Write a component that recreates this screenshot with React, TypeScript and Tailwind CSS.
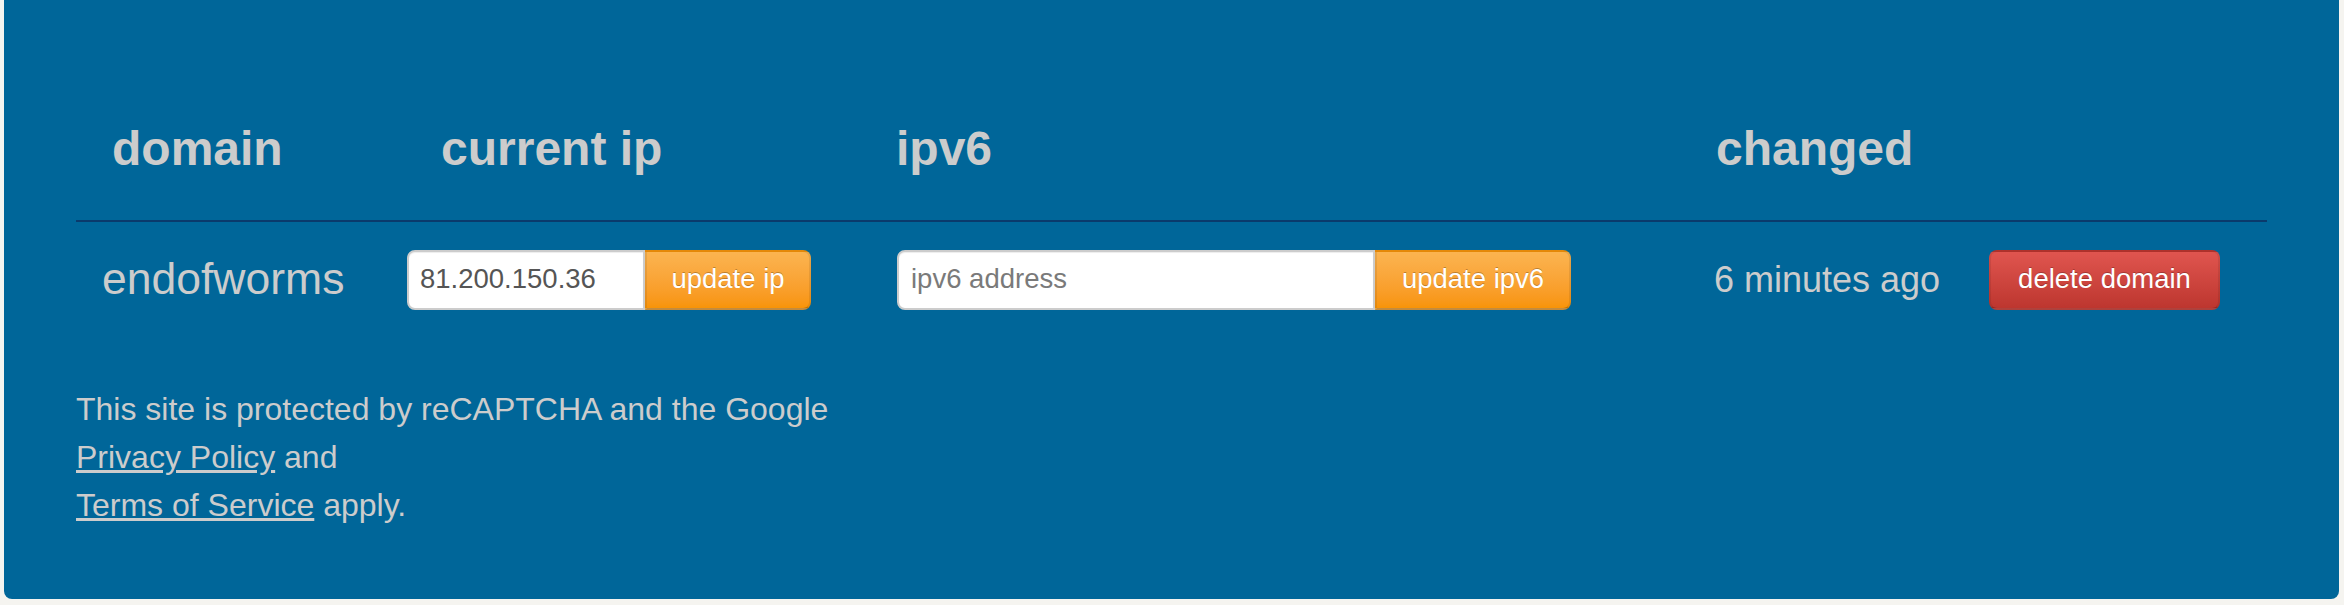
import React from "react";

const font = { fontFamily: '"Liberation Sans", Arial, Helvetica, sans-serif' };

export default function App() {
  return (
    <div className="min-h-[605px] w-full bg-[#f5f4f0]" style={font}>
      <div className="ml-[4px] w-[2335px] rounded-b-[8px] bg-[#006699] px-[72px] pt-[125px] pb-[70px] text-[#cccccc]">
        {/* header row */}
        <div className="grid grid-cols-[314px_490px_820px_270px_1fr] border-b-2 border-[#0a3a6c] pb-[47px] text-[48px] font-bold leading-[48px]">
          <div className="pl-[36px]">domain</div>
          <div className="pl-[51px]">current ip</div>
          <div className="pl-[16px]">ipv6</div>
          <div className="pl-[16px]">changed</div>
          <div></div>
        </div>

        {/* data row */}
        <div className="mt-[27px] grid h-[60px] grid-cols-[314px_490px_820px_270px_1fr] items-center">
          <div className="pl-[26px] text-[44.5px] leading-[60px] pb-[2px]">endofworms</div>
          <div className="flex h-[60px] pl-[17px]">
            <input
              readOnly
              value="81.200.150.36"
              className="h-[60px] w-[238px] rounded-l-[8px] border-2 border-[#cccccc] bg-white pl-[11px] pb-[3px] text-[27.5px] text-[#555555] shadow-[inset_0_1px_1px_rgba(0,0,0,0.075)] outline-none"
              style={font}
            />
            <button
              className="h-[60px] w-[166px] rounded-r-[8px] border-2 border-[rgba(0,0,0,0.08)] border-b-[rgba(0,0,0,0.22)] bg-linear-to-b from-[#fbb450] to-[#f89406] pb-[3px] text-[27.5px] text-white [text-shadow:0_-1px_0_rgba(0,0,0,0.25)]"
              style={font}
            >
              update ip
            </button>
          </div>
          <div className="flex h-[60px] pl-[17px]">
            <input
              placeholder="ipv6 address"
              className="h-[60px] w-[478px] rounded-l-[8px] border-2 border-[#cccccc] bg-white pl-[12px] pb-[3px] text-[27.5px] text-[#555555] placeholder:text-[#7a7a7a] shadow-[inset_0_1px_1px_rgba(0,0,0,0.075)] outline-none"
              style={font}
            />
            <button
              className="h-[60px] w-[196px] rounded-r-[8px] border-2 border-[rgba(0,0,0,0.08)] border-b-[rgba(0,0,0,0.22)] bg-linear-to-b from-[#fbb450] to-[#f89406] pb-[3px] text-[27.5px] text-white [text-shadow:0_-1px_0_rgba(0,0,0,0.25)]"
              style={font}
            >
              update ipv6
            </button>
          </div>
          <div className="pl-[14px] text-[36px] leading-[60px]">6 minutes ago</div>
          <div className="pl-[19px]">
            <button
              className="h-[60px] w-[231px] rounded-[8px] border-2 border-[rgba(0,0,0,0.08)] border-b-[rgba(0,0,0,0.22)] bg-linear-to-b from-[#e0554f] to-[#bd362f] pb-[3px] text-[27.5px] text-white [text-shadow:0_-1px_0_rgba(0,0,0,0.25)]"
              style={font}
            >
              delete domain
            </button>
          </div>
        </div>

        {/* footer */}
        <div className="mt-[76px] text-[32px] leading-[48px]">
          This site is protected by reCAPTCHA and the Google
          <br />
          <a href="#" className="underline">Privacy Policy</a> and
          <br />
          <a href="#" className="underline">Terms of Service</a> apply.
        </div>
      </div>
    </div>
  );
}
